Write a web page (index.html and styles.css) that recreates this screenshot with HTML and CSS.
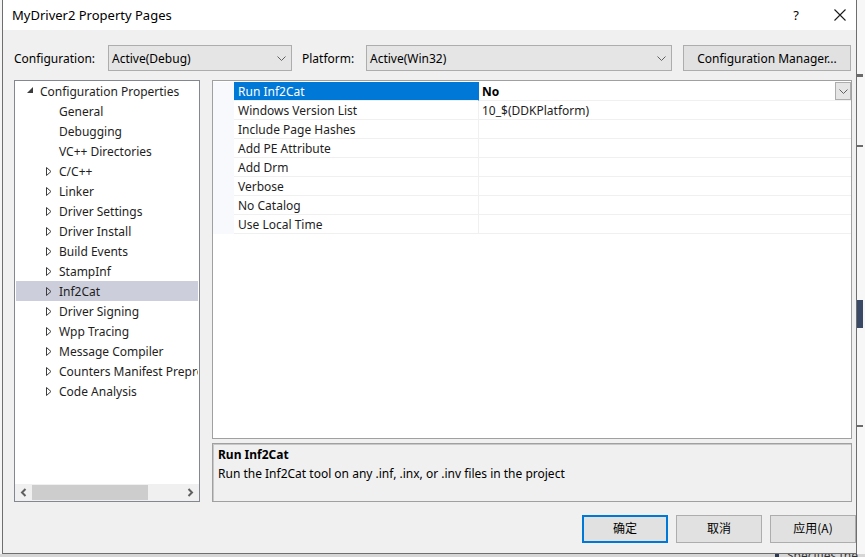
FILE: index.html
```html
<!DOCTYPE html>
<html>
<head>
<meta charset="utf-8">
<title>MyDriver2 Property Pages</title>
<link rel="stylesheet" href="styles.css">
</head>
<body>
<div class="desk">
  <div class="dialog">
    <div class="titlebar">
      <span class="title">MyDriver2 Property Pages</span>
      <span class="tb-help">?</span>
      <span class="tb-close">
        <svg width="12" height="12" viewBox="0 0 12 12"><path d="M0.5 0.5 L11.5 11.5 M11.5 0.5 L0.5 11.5" stroke="#1a1a1a" stroke-width="1.1" fill="none"/></svg>
      </span>
    </div>

    <div class="configrow">
      <span class="lbl lbl-conf">Configuration:</span>
      <div class="combo combo-conf">
        <span>Active(Debug)</span>
        <svg class="chev" width="9" height="5" viewBox="0 0 9 5"><path d="M0.5 0.5 L4.5 4.5 L8.5 0.5" stroke="#606060" stroke-width="1" fill="none"/></svg>
      </div>
      <span class="lbl lbl-plat">Platform:</span>
      <div class="combo combo-plat">
        <span>Active(Win32)</span>
        <svg class="chev" width="9" height="5" viewBox="0 0 9 5"><path d="M0.5 0.5 L4.5 4.5 L8.5 0.5" stroke="#606060" stroke-width="1" fill="none"/></svg>
      </div>
      <div class="btn btn-cm">Configuration Manager...</div>
    </div>

    <div class="main">
      <div class="tree">
        <div class="tree-items">
          <div class="ti root"><svg class="exp" width="7" height="7" viewBox="0 0 7 7"><path d="M6 0 L6 6 L0 6 Z" fill="#3c3c3c"/></svg><span>Configuration Properties</span></div>
          <div class="ti leaf"><span>General</span></div>
          <div class="ti leaf"><span>Debugging</span></div>
          <div class="ti leaf"><span>VC++ Directories</span></div>
          <div class="ti child"><svg class="col" width="6" height="9" viewBox="0 0 6 9"><path d="M0.5 0.5 L5 4.5 L0.5 8.5 Z" fill="none" stroke="#3c3c3c" stroke-width="1"/></svg><span>C/C++</span></div>
          <div class="ti child"><svg class="col" width="6" height="9" viewBox="0 0 6 9"><path d="M0.5 0.5 L5 4.5 L0.5 8.5 Z" fill="none" stroke="#3c3c3c" stroke-width="1"/></svg><span>Linker</span></div>
          <div class="ti child"><svg class="col" width="6" height="9" viewBox="0 0 6 9"><path d="M0.5 0.5 L5 4.5 L0.5 8.5 Z" fill="none" stroke="#3c3c3c" stroke-width="1"/></svg><span>Driver Settings</span></div>
          <div class="ti child"><svg class="col" width="6" height="9" viewBox="0 0 6 9"><path d="M0.5 0.5 L5 4.5 L0.5 8.5 Z" fill="none" stroke="#3c3c3c" stroke-width="1"/></svg><span>Driver Install</span></div>
          <div class="ti child"><svg class="col" width="6" height="9" viewBox="0 0 6 9"><path d="M0.5 0.5 L5 4.5 L0.5 8.5 Z" fill="none" stroke="#3c3c3c" stroke-width="1"/></svg><span>Build Events</span></div>
          <div class="ti child"><svg class="col" width="6" height="9" viewBox="0 0 6 9"><path d="M0.5 0.5 L5 4.5 L0.5 8.5 Z" fill="none" stroke="#3c3c3c" stroke-width="1"/></svg><span>StampInf</span></div>
          <div class="ti child selected"><svg class="col" width="6" height="9" viewBox="0 0 6 9"><path d="M0.5 0.5 L5 4.5 L0.5 8.5 Z" fill="none" stroke="#3c3c3c" stroke-width="1"/></svg><span>Inf2Cat</span></div>
          <div class="ti child"><svg class="col" width="6" height="9" viewBox="0 0 6 9"><path d="M0.5 0.5 L5 4.5 L0.5 8.5 Z" fill="none" stroke="#3c3c3c" stroke-width="1"/></svg><span>Driver Signing</span></div>
          <div class="ti child"><svg class="col" width="6" height="9" viewBox="0 0 6 9"><path d="M0.5 0.5 L5 4.5 L0.5 8.5 Z" fill="none" stroke="#3c3c3c" stroke-width="1"/></svg><span>Wpp Tracing</span></div>
          <div class="ti child"><svg class="col" width="6" height="9" viewBox="0 0 6 9"><path d="M0.5 0.5 L5 4.5 L0.5 8.5 Z" fill="none" stroke="#3c3c3c" stroke-width="1"/></svg><span>Message Compiler</span></div>
          <div class="ti child"><svg class="col" width="6" height="9" viewBox="0 0 6 9"><path d="M0.5 0.5 L5 4.5 L0.5 8.5 Z" fill="none" stroke="#3c3c3c" stroke-width="1"/></svg><span>Counters Manifest Preprocessor</span></div>
          <div class="ti child"><svg class="col" width="6" height="9" viewBox="0 0 6 9"><path d="M0.5 0.5 L5 4.5 L0.5 8.5 Z" fill="none" stroke="#3c3c3c" stroke-width="1"/></svg><span>Code Analysis</span></div>
        </div>
        <div class="hscroll">
          <svg class="sarrow" width="7" height="9" viewBox="0 0 7 9"><path d="M5.5 1 L2 4.5 L5.5 8" stroke="#606060" stroke-width="2" fill="none"/></svg>
          <div class="strack"><div class="sthumb"></div></div>
          <svg class="sarrow" width="7" height="9" viewBox="0 0 7 9"><path d="M1.5 1 L5 4.5 L1.5 8" stroke="#606060" stroke-width="2" fill="none"/></svg>
        </div>
      </div>

      <div class="rightcol">
        <div class="grid">
          <div class="gr sel">
            <div class="gut"></div>
            <div class="nm">Run Inf2Cat</div>
            <div class="val"><b>No</b>
              <span class="dd"><svg width="9" height="5" viewBox="0 0 9 5"><path d="M0.5 0.5 L4.5 4.5 L8.5 0.5" stroke="#606060" stroke-width="1" fill="none"/></svg></span>
            </div>
          </div>
          <div class="gr"><div class="gut"></div><div class="nm">Windows Version List</div><div class="val">10_$(DDKPlatform)</div></div>
          <div class="gr"><div class="gut"></div><div class="nm">Include Page Hashes</div><div class="val"></div></div>
          <div class="gr"><div class="gut"></div><div class="nm">Add PE Attribute</div><div class="val"></div></div>
          <div class="gr"><div class="gut"></div><div class="nm">Add Drm</div><div class="val"></div></div>
          <div class="gr"><div class="gut"></div><div class="nm">Verbose</div><div class="val"></div></div>
          <div class="gr"><div class="gut"></div><div class="nm">No Catalog</div><div class="val"></div></div>
          <div class="gr"><div class="gut"></div><div class="nm">Use Local Time</div><div class="val"></div></div>
        </div>
        <div class="desc">
          <div class="desc-title">Run Inf2Cat</div>
          <div class="desc-text">Run the Inf2Cat tool on any .inf, .inx, or .inv files in the project</div>
        </div>
      </div>
    </div>

    <div class="buttons">
      <div class="btn dbtn default">确定</div>
      <div class="btn dbtn">取消</div>
      <div class="btn dbtn">应用(A)</div>
    </div>
  </div>
  <div class="behind-right">
    <div class="frag f1"></div>
    <div class="frag f2"></div>
    <div class="frag f3"></div>
    <div class="frag f4"></div>
  </div>
</div>
<div class="behind-bottom">
  <div class="bb-bar"></div>
  <span class="bb-text">Specifies the</span>
</div>
</body>
</html>
```

FILE: styles.css
```css
html, body {
  margin: 0;
  padding: 0;
}
body {
  width: 865px;
  height: 557px;
  overflow: hidden;
  background: #f4f4f4;
  font-family: "Noto Sans", "Noto Sans CJK SC", sans-serif;
  font-size: 12px;
  color: #1a1a1a;
}
.desk {
  display: flex;
  height: 554px;
}
.dialog {
  margin-left: 2px;
  width: 855px;
  height: 554px;
  box-sizing: border-box;
  border: 1px solid #6e6e6e;
  border-top: none;
  background: #f0f0f0;
  display: flex;
  flex-direction: column;
}
.titlebar {
  height: 30px;
  background: #ffffff;
  display: flex;
  align-items: center;
  flex-shrink: 0;
}
.title {
  margin-left: 9px;
  font-size: 13px;
  color: #000;
  flex: 1;
}
.tb-help {
  font-size: 13px;
  width: 56px;
  text-align: center;
  color: #000;
}
.tb-close {
  width: 32px;
  display: flex;
  justify-content: center;
  align-items: center;
}

.configrow {
  display: flex;
  align-items: center;
  margin-top: 15px;
  height: 26px;
  padding-left: 11px;
  flex-shrink: 0;
}
.lbl {
  color: #000;
}
.lbl-conf { width: 94px; }
.lbl-plat { margin-left: 10px; width: 64px; }
.combo {
  box-sizing: border-box;
  height: 26px;
  border: 1px solid #adadad;
  background: #e5e5e5;
  display: flex;
  align-items: center;
  padding-left: 3px;
  padding-right: 5px;
  color: #000;
}
.combo span { flex: 1; }
.combo-conf { width: 184px; }
.combo-plat { width: 306px; }
.btn {
  box-sizing: border-box;
  border: 1px solid #adadad;
  background: #e1e1e1;
  display: flex;
  align-items: center;
  justify-content: center;
  color: #000;
}
.btn-cm {
  margin-left: 11px;
  width: 168px;
  height: 26px;
}

.main {
  display: flex;
  margin-top: 9px;
  margin-left: 11px;
  height: 422px;
  flex-shrink: 0;
}
.tree {
  width: 186px;
  box-sizing: border-box;
  border: 1px solid #828790;
  background: #ffffff;
  display: flex;
  flex-direction: column;
  overflow: hidden;
}
.tree-items {
  flex: 1;
  padding-left: 1px;
  padding-right: 1px;
}
.ti {
  height: 20px;
  display: flex;
  align-items: center;
  white-space: nowrap;
  overflow: hidden;
  color: #1e1e1e;
}
.ti svg { flex-shrink: 0; }
.ti.root { padding-left: 11px; }
.ti.root .exp { margin-right: 6px; margin-top: -1px; }
.ti.leaf { padding-left: 43px; }
.ti.child { padding-left: 30px; }
.ti.child .col { margin-right: 7px; }
.ti.selected { background: #cccedb; }

.hscroll {
  height: 17px;
  margin-top: 1px;
  background: #f0f0f0;
  display: flex;
  align-items: center;
  padding: 0 5px;
}
.hscroll svg { flex-shrink: 0; }
.strack {
  flex: 1;
  height: 15px;
  margin: 0 6px 0 5px;
}
.sthumb {
  width: 116px;
  height: 15px;
  background: #cdcdcd;
}

.rightcol {
  margin-left: 12px;
  width: 640px;
  display: flex;
  flex-direction: column;
}
.grid {
  height: 359px;
  box-sizing: border-box;
  border: 1px solid #a0a0a0;
  background: #ffffff;
  padding-top: 1px;
}
.gr {
  display: flex;
  height: 19px;
  box-sizing: border-box;
}
.gut {
  width: 21px;
  background: #f7f9fc;
}
.nm {
  width: 245px;
  box-sizing: border-box;
  padding-left: 4px;
  padding-top: 1px;
  border-bottom: 1px solid #f0f0f0;
  border-right: 1px solid #f0f0f0;
  line-height: 17px;
  color: #1e1e1e;
}
.val {
  flex: 1;
  box-sizing: border-box;
  padding-left: 3px;
  border-bottom: 1px solid #f0f0f0;
  line-height: 18px;
  display: flex;
  color: #1e1e1e;
}
.val b, .val-text { flex: 1; color: #000; }
.gr .val { padding-top: 1px; line-height: 17px; }
.gr.sel .val { padding-top: 0; }
.gr.sel .val b { padding-top: 1px; }
.gr.sel .nm {
  background: #0078d7;
  color: #ffffff;
  border-right-color: #0078d7;
}
.dd {
  width: 16px;
  height: 18px;
  box-sizing: border-box;
  border: 1px solid #adadad;
  background: #e5e5e5;
  display: flex;
  align-items: center;
  justify-content: center;
}

.desc {
  margin-top: 4px;
  height: 59px;
  box-sizing: border-box;
  border: 1px solid #a0a0a0;
  box-shadow: inset 1px 1px 0 #c8c8c8;
  background: #f0f0f0;
  padding: 2px 5px;
  color: #000;
}
.desc-title {
  font-weight: bold;
  line-height: 18px;
}
.desc-text {
  line-height: 20px;
}

.buttons {
  display: flex;
  justify-content: flex-end;
  gap: 8px;
  margin-top: 13px;
  flex-shrink: 0;
}
.dbtn {
  width: 86px;
  height: 28px;
  padding-bottom: 3px;
  font-family: "Noto Sans CJK SC", "Noto Sans", sans-serif;
  font-size: 12px;
}
.dbtn.default {
  border: 2px solid #0078d7;
}

.behind-right {
  flex: 1;
  background: #f7f7f7;
  position: relative;
}
.frag {
  position: absolute;
  left: 0;
  width: 6px;
  background: #6a6a6a;
}
.f1 { top: 74px; height: 3px; }
.f2 { top: 145px; height: 2px; }
.f3 { top: 300px; height: 28px; background: #3a4a66; }
.f4 { top: 425px; height: 2px; }
.behind-bottom {
  height: 3px;
  background: #d6d6d6;
  position: relative;
  overflow: hidden;
}
.bb-bar {
  position: absolute;
  left: 775px;
  top: 0;
  width: 4px;
  height: 3px;
  background: #2b3a55;
}
.bb-text {
  position: absolute;
  left: 787px;
  top: -7px;
  font-size: 12px;
  color: #333;
}
```
